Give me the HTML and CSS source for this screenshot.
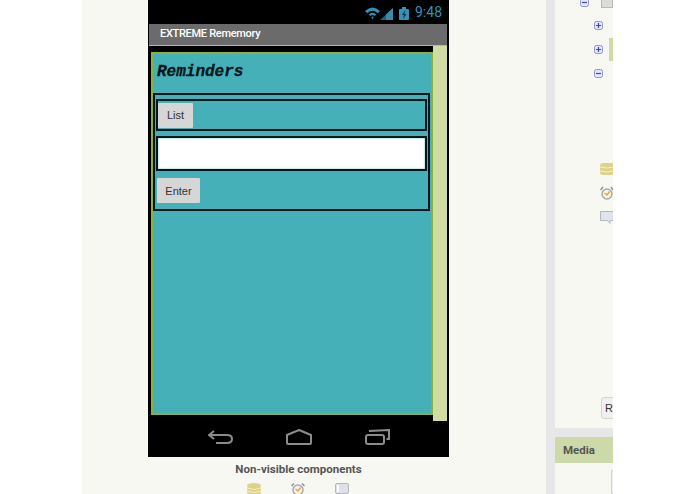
FILE: index.html
```html
<!DOCTYPE html>
<html>
<head>
    <meta charset="utf-8" />
    <title>EXTREME Rememory</title>
    <link rel="stylesheet" href="styles.css">
</head>
<body>
    <div class="page">
        <div class="viewer">
            <div class="phone">
                <div class="status">
                    <svg class="status-icons" width="44" height="18" viewBox="0 0 44 18">
                        <path d="M0 8 Q7.500 1 15 8 L12.800 10.200 Q7.500 5.500 2.200 10.200 Z M3.800 11.500 Q7.500 8 11.200 11.500 L9.800 13 Q7.500 11 5.200 13 Z M6.300 14 Q7.500 13 8.700 14 L7.500 16.500 Z" fill="#2f93bb" />
                        <path d="M15 17 L28 17 L28 5 Z" fill="#1c5f7a" />
                        <path d="M21 11.500 L28 5 L28 17 L21 17 Z" fill="#3a8aa8" />
                        <rect x="34" y="6" width="10" height="11" rx="1" fill="#2f93bb" />
                        <rect x="37" y="4" width="4" height="2" fill="#2f93bb" />
                        <path d="M40.500 7 L37 12 L39 12 L38 16 L41.500 11 L39.500 11 Z" fill="#0c3342" />
                    </svg>
                    <span class="clock">9:48</span>
                </div>
                <div class="titlebar">EXTREME Rememory</div>
                <div class="screen">
                    <div class="form">
                        <h1 class="heading">Reminders</h1>
                        <div class="outer">
                            <div class="inner">
                                <button class="btn btn-list">List</button>
                            </div>
                            <div class="field"><div class="field-white"></div></div>
                            <button class="btn btn-enter">Enter</button>
                        </div>
                    </div>
                    <div class="scrollbar"></div>
                </div>
                <div class="nav">
                    <svg width="25" height="16" viewBox="0 0 25 16">
                        <path d="M6 2 L1 6 L6 10 M1 6 L19 6 Q24 6 24 10 Q24 14 19 14 L8 14" fill="none" stroke="#8b8b8b" stroke-width="2" />
                    </svg>
                    <svg width="28" height="16" viewBox="0 0 28 16">
                        <path d="M14 1 L26 6 L26 14 Q26 15 25 15 L3 15 Q2 15 2 14 L2 6 Z" fill="none" stroke="#8b8b8b" stroke-width="2" />
                    </svg>
                    <svg width="25" height="16" viewBox="0 0 25 16">
                        <rect x="1" y="6" width="18" height="9" rx="2" fill="none" stroke="#8b8b8b" stroke-width="2" />
                        <path d="M5 3 L5 2 L24 1 L24 10 L21.500 10" fill="none" stroke="#8b8b8b" stroke-width="2" />
                    </svg>
                </div>
            </div>
            <div class="nonvisible-title">Non-visible components</div>
            <div class="nonvisible">
                <svg width="14" height="11" viewBox="0 0 14 11">
                    <ellipse cx="7" cy="2.500" rx="7" ry="2.500" fill="#dcd38a" />
                    <rect y="3" width="14" height="8" rx="2" fill="#dcd38a" />
                    <path d="M0 5 Q7 8 14 5 M0 8 Q7 11 14 8" fill="none" stroke="#f4f0c8" />
                </svg>
                <svg width="14" height="11" viewBox="0 0 14 11">
                    <circle cx="7" cy="7" r="5" fill="#f7f3e6" stroke="#a8a8a8" stroke-width="1.500" />
                    <path d="M4.500 6 L7 8 L9.500 4.500" fill="none" stroke="#e8a24a" stroke-width="1.500" />
                    <path d="M0.500 3 L3 0.500 M13.500 3 L11 0.500" stroke="#8f8f8f" stroke-width="1.500" />
                </svg>
                <svg width="14" height="11" viewBox="0 0 14 11">
                    <rect x="0.500" y="0.500" width="13" height="10" rx="1.500" fill="#dfe1e6" stroke="#b4b7c0" />
                    <rect x="2" y="2" width="2" height="7" fill="#fff" />
                </svg>
            </div>
        </div>
        <div class="splitter"></div>
        <div class="side">
            <div class="tree">
                <div class="tree-row tree-row-top">
                    <svg class="toggle" width="9" height="9" viewBox="0 0 9 9"><rect x="0.500" y="0.500" width="8" height="8" rx="2" fill="#e3e6f5" stroke="#8f97cf" /><path d="M2 4.500 L7 4.500" stroke="#3f4aa8" stroke-width="1.200" /></svg>
                    <div class="folder"></div>
                </div>
                <div class="tree-row tree-row-sub">
                    <svg class="toggle" width="9" height="9" viewBox="0 0 9 9"><rect x="0.500" y="0.500" width="8" height="8" rx="2" fill="#e3e6f5" stroke="#8f97cf" /><path d="M2 4.500 L7 4.500 M4.500 2 L4.500 7" stroke="#3f4aa8" stroke-width="1.200" /></svg>
                </div>
                <div class="tree-row tree-row-sub">
                    <svg class="toggle" width="9" height="9" viewBox="0 0 9 9"><rect x="0.500" y="0.500" width="8" height="8" rx="2" fill="#e3e6f5" stroke="#8f97cf" /><path d="M2 4.500 L7 4.500 M4.500 2 L4.500 7" stroke="#3f4aa8" stroke-width="1.200" /></svg>
                    <div class="selected"></div>
                </div>
                <div class="tree-row tree-row-sub">
                    <svg class="toggle" width="9" height="9" viewBox="0 0 9 9"><rect x="0.500" y="0.500" width="8" height="8" rx="2" fill="#e3e6f5" stroke="#8f97cf" /><path d="M2 4.500 L7 4.500" stroke="#3f4aa8" stroke-width="1.200" /></svg>
                </div>
            </div>
            <div class="side-icons">
                <svg width="13" height="12" viewBox="0 0 13 12">
                    <rect width="14" height="12" rx="3" fill="#dcd38a" />
                    <path d="M0 4 Q7 6 13 4 M0 8 Q7 10 13 8" fill="none" stroke="#f4f0c8" />
                </svg>
                <svg width="13" height="14" viewBox="0 0 13 14">
                    <circle cx="7" cy="8" r="5" fill="#f7f3e6" stroke="#a8a8a8" stroke-width="1.500" />
                    <path d="M4.500 7 L7 9 L9.500 5.500" fill="none" stroke="#e8a24a" stroke-width="1.500" />
                    <path d="M0.500 4 L3 1 M13 4 L11 1" stroke="#8f8f8f" stroke-width="1.500" />
                </svg>
                <svg width="13" height="13" viewBox="0 0 13 13">
                    <path d="M0.500 0.500 L14 0.500 L14 9.500 L10 9.500 L10 12.500 L7.500 9.500 L0.500 9.500 Z" fill="#e1e3ea" stroke="#b4b7c0" />
                </svg>
            </div>
            <div class="side-fill">
                <div class="rename">R</div>
            </div>
            <div class="hsplit"></div>
            <div class="media">Media</div>
            <div class="media-body"><div class="upload"></div></div>
        </div>
    </div>
</body>
</html>
```

FILE: styles.css
```css
* {
    padding: 0;
    margin: 0;
    box-sizing: border-box;
}

body {
    background-color: #fff;
    font-family: "Roboto", "Liberation Sans", sans-serif;
    overflow: hidden;
}

.page {
    display: flex;
    width: 531px;
    height: 494px;
    margin-left: 82px;
    background-color: #f7f8f2;
    overflow: hidden;
}

.viewer {
    width: 464px;
    padding-left: 66px;
    flex-shrink: 0;
}

.phone {
    width: 301px;
    height: 457px;
    background-color: #000;
    display: flex;
    flex-direction: column;
}

.status {
    height: 24px;
    display: flex;
    justify-content: flex-end;
    align-items: center;
    gap: 6px;
    padding-right: 7px;
    flex-shrink: 0;
}

.clock {
    font-size: 14px;
    color: #2f93bb;
}

.titlebar {
    height: 22px;
    margin: 0 2px 0 1px;
    padding-left: 11px;
    background-color: #6b6b6b;
    border-bottom: 1px solid #b5b5b5;
    color: #fff;
    font-size: 11px;
    font-weight: 500;
    letter-spacing: -0.3px;
    line-height: 20px;
    flex-shrink: 0;
}

.screen {
    height: 375px;
    display: flex;
    padding-left: 3px;
    flex-shrink: 0;
}

.form {
    width: 282px;
    height: 363px;
    margin-top: 6px;
    background-color: #45b0b8;
    border: 2px solid #8cb03a;
}

.heading {
    height: 39px;
    padding: 9px 0 0 4px;
    font-family: "Liberation Mono", monospace;
    font-size: 16px;
    font-style: italic;
    font-weight: bold;
    line-height: 18px;
    color: #06161a;
    -webkit-text-stroke: 0.3px #06161a;
}

.outer {
    width: 277px;
    height: 118px;
    border: 2px solid #04161a;
    padding-top: 4px;
}

.inner {
    height: 32px;
    margin: 0 1px;
    border: 2px solid #04161a;
    display: flex;
    align-items: center;
}

.btn {
    font-family: "Liberation Sans", sans-serif;
    font-size: 11px;
    color: #333;
    background-color: #d6d6d6;
    border: none;
    border-radius: 1px;
    display: block;
}

.btn-list {
    width: 35px;
    height: 25px;
}

.field {
    height: 35px;
    margin: 5px 1px 0;
    border: 2px solid #04161a;
}

.field-white {
    height: 100%;
    background-color: #fff;
    box-shadow: inset 0 0 2px #45b0b8;
}

.btn-enter {
    width: 43px;
    height: 25px;
    margin: 7px 0 0 2px;
}

.scrollbar {
    width: 14px;
    background-color: #d0dca3;
}

.nav {
    height: 36px;
    display: flex;
    justify-content: space-between;
    align-items: center;
    padding: 0 59px 4px 60px;
    flex-shrink: 0;
}

.nonvisible-title {
    width: 301px;
    margin-top: 5px;
    font-size: 11.5px;
    font-weight: bold;
    line-height: 14px;
    text-align: center;
    color: #555;
}

.nonvisible {
    width: 301px;
    display: flex;
    gap: 30px;
    padding: 7px 0 0 99px;
}

.splitter {
    width: 9px;
    background-color: #e7e7e7;
    flex-shrink: 0;
}

.side {
    width: 58px;
    display: flex;
    flex-direction: column;
    overflow: hidden;
}

.tree {
    height: 163px;
    flex-shrink: 0;
}

.tree-row {
    height: 24px;
    display: flex;
}

.tree-row-top {
    height: 13px;
    padding-left: 25px;
    margin-top: -2px;
    gap: 12px;
    margin-bottom: 2px;
}

.tree-row-sub {
    padding-left: 39px;
    align-items: center;
}

.folder {
    width: 20px;
    height: 10px;
    background-color: #dcdcd6;
    border: 1px solid #b8b8b8;
}

.selected {
    width: 4px;
    height: 23px;
    margin-left: 6px;
    background-color: #cfdba6;
}

.toggle {
    flex-shrink: 0;
}

.side-icons {
    display: flex;
    flex-direction: column;
    gap: 11px;
    padding-left: 45px;
    flex-shrink: 0;
}

.side-fill {
    flex: 1;
    padding: 0 0 9px 46px;
    display: flex;
    align-items: flex-end;
}

.rename {
    width: 30px;
    height: 22px;
    flex-shrink: 0;
    padding-left: 3px;
    background-color: #f0f0f0;
    border: 1px solid #d4d4d4;
    border-radius: 3px;
    font-family: "Liberation Sans", sans-serif;
    font-size: 11px;
    line-height: 20px;
    color: #333;
}

.hsplit {
    height: 9px;
    background-color: #e7e7e7;
    flex-shrink: 0;
}

.media {
    height: 26px;
    padding-left: 8px;
    background-color: #cdd9a8;
    font-size: 11.5px;
    font-weight: bold;
    line-height: 26px;
    color: #555;
    flex-shrink: 0;
}

.media-body {
    height: 31px;
    padding: 7px 0 0 56px;
    flex-shrink: 0;
}

.upload {
    width: 20px;
    height: 24px;
    background-color: #f0f0f0;
    border: 1px solid #d4d4d4;
}
```
